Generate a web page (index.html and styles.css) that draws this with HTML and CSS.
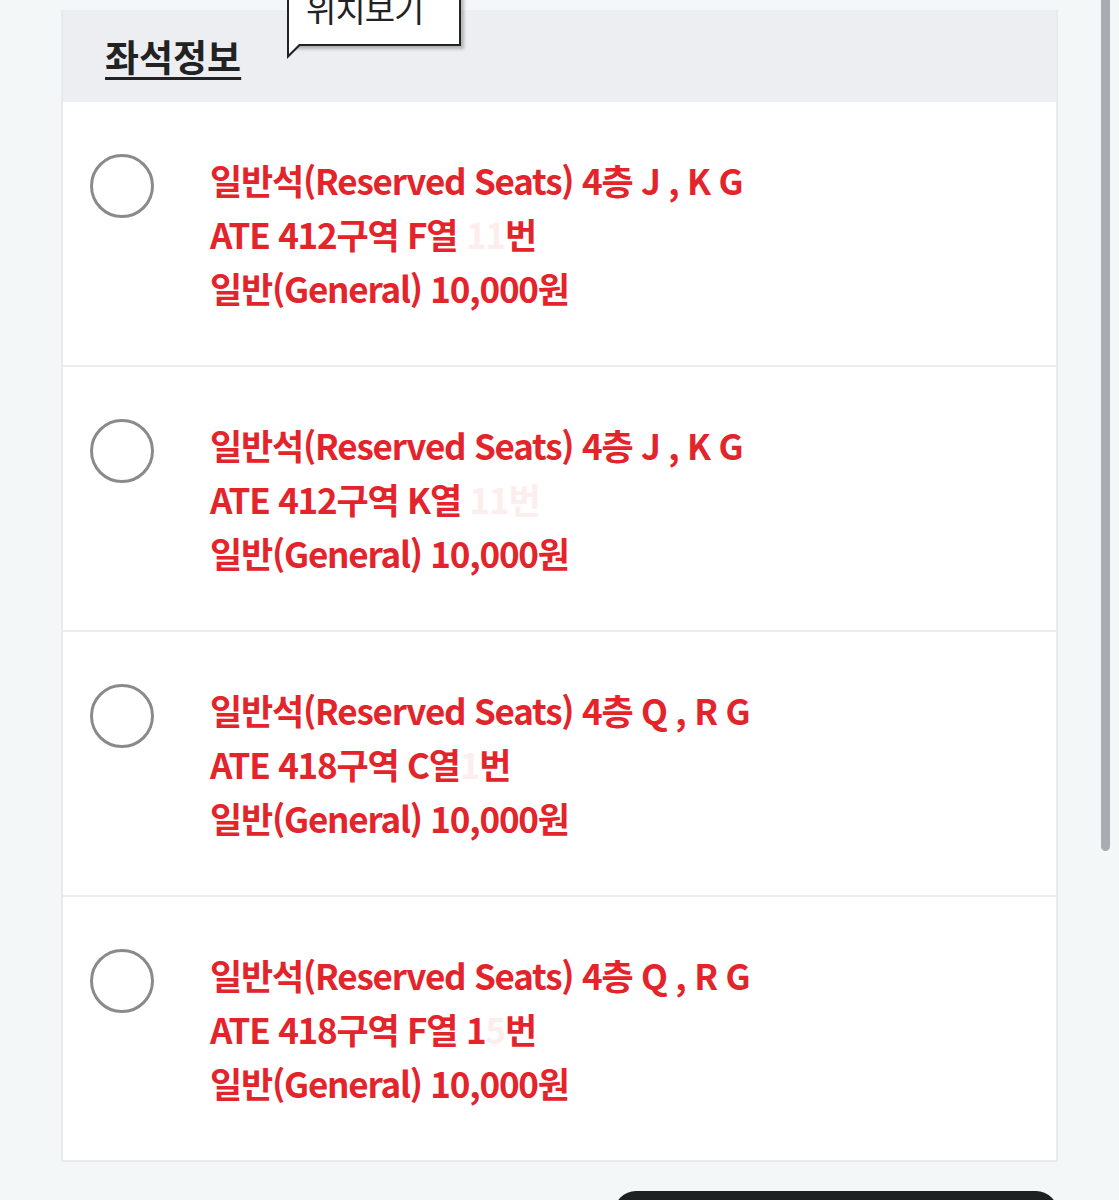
FILE: index.html
```
<!DOCTYPE html>
<html lang="ko">
<head>
    <meta charset="UTF-8">
    <meta name="viewport" content="width=device-width, initial-scale=1.0">
    <title>좌석정보</title>
    <link rel="stylesheet" href="styles.css">
</head>
<body>
    <div class="page">
        <div class="seat-card">
            <div class="seat-header">
                <h2 class="seat-title">좌석정보</h2>
                <div class="tooltip">위치보기</div>
            </div>

            <label class="seat-row">
                <span class="radio"></span>
                <span class="seat-text">
                    <span class="line">일반석(Reserved Seats) 4층 J , K G</span>
                    <span class="line">ATE 412구역 F열 <span class="masked">11</span>번</span>
                    <span class="line">일반(General) 10,000원</span>
                </span>
            </label>

            <label class="seat-row">
                <span class="radio"></span>
                <span class="seat-text">
                    <span class="line">일반석(Reserved Seats) 4층 J , K G</span>
                    <span class="line">ATE 412구역 K열 <span class="masked">11번</span></span>
                    <span class="line">일반(General) 10,000원</span>
                </span>
            </label>

            <label class="seat-row">
                <span class="radio"></span>
                <span class="seat-text">
                    <span class="line">일반석(Reserved Seats) 4층 Q , R G</span>
                    <span class="line">ATE 418구역 C열<span class="masked">1</span>번</span>
                    <span class="line">일반(General) 10,000원</span>
                </span>
            </label>

            <label class="seat-row">
                <span class="radio"></span>
                <span class="seat-text">
                    <span class="line">일반석(Reserved Seats) 4층 Q , R G</span>
                    <span class="line">ATE 418구역 F열 1<span class="masked">5</span>번</span>
                    <span class="line">일반(General) 10,000원</span>
                </span>
            </label>
        </div>

        <div class="bottom-bar">
            <button class="next-btn" type="button"></button>
        </div>
    </div>

    <div class="scrollbar"></div>
</body>
</html>
```

FILE: styles.css
```
* {
    margin: 0;
    padding: 0;
    box-sizing: border-box;
}

body {
    font-family: "Noto Sans CJK KR", "Noto Sans", sans-serif;
    background: #f4f7f8;
    overflow: hidden;
    height: 1200px;
}

.page {
    padding: 10px 0 0 61px;
    width: 1058px;
}

.seat-card {
    background: white;
    border: 2px solid #e8eaec;
    border-top: none;
}

.seat-header {
    position: relative;
    height: 92px;
    background: #eceef1;
    padding: 22px 0 0 42px;
}

.seat-title {
    font-size: 37px;
    font-weight: 700;
    color: #222;
    text-decoration: underline;
    text-decoration-thickness: 3px;
    text-underline-offset: 5px;
    letter-spacing: 0;
    line-height: 48px;
}

.tooltip {
    position: absolute;
    left: 224px;
    top: -20px;
    width: 174px;
    height: 56px;
    background: white;
    border: 2px solid #222;
    box-shadow: 3px 3px 3px rgba(0, 0, 0, 0.25);
    font-size: 33px;
    line-height: 32px;
    color: #222;
    padding-left: 17px;
    letter-spacing: -1px;
}

.tooltip::before,
.tooltip::after {
    content: "";
    position: absolute;
    clip-path: polygon(0 0, 100% 0, 0 100%);
}

.tooltip::before {
    left: -2px;
    top: 100%;
    width: 15px;
    height: 15px;
    background: #222;
}

.tooltip::after {
    left: 0;
    top: 100%;
    width: 10px;
    height: 10px;
    background: white;
}

.seat-row {
    display: flex;
    align-items: flex-start;
    gap: 56px;
    height: 265px;
    padding: 52px 0 0 27px;
    border-bottom: 2px solid #eaecee;
}

.seat-row:last-child {
    border-bottom: none;
    height: 263px;
}

.radio {
    flex: none;
    width: 64px;
    height: 64px;
    border: 3px solid #8a8a8a;
    border-radius: 50%;
}

.seat-text {
    display: flex;
    flex-direction: column;
    color: #e3242b;
    font-size: 35px;
    font-weight: 700;
    line-height: 54px;
    letter-spacing: -1.2px;
    margin-top: -1px;
}

.masked {
    color: #fdeeee;
}

.bottom-bar {
    display: flex;
    justify-content: flex-end;
    margin-top: 29px;
}

.next-btn {
    width: 444px;
    height: 70px;
    background: #1f2022;
    border: none;
    border-radius: 22px;
}

.scrollbar {
    position: fixed;
    top: 0;
    left: 1101px;
    width: 9px;
    height: 851px;
    background: #a9adaf;
    border-radius: 0 0 5px 5px;
}
```
